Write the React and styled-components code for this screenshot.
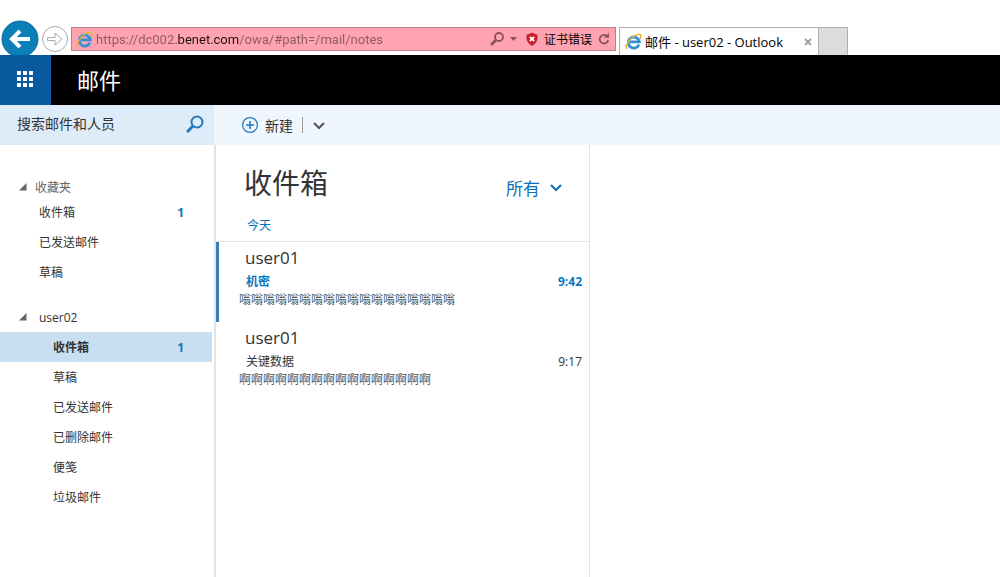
import styled, { createGlobalStyle } from "styled-components";

const favorites = [
  { name: "收件箱", count: 1 },
  { name: "已发送邮件" },
  { name: "草稿" },
];

const folders = [
  { name: "收件箱", count: 1, active: true },
  { name: "草稿" },
  { name: "已发送邮件" },
  { name: "已删除邮件" },
  { name: "便笺" },
  { name: "垃圾邮件" },
];

const messages = [
  {
    from: "user01",
    subject: "机密",
    time: "9:42",
    preview: "嗡嗡嗡嗡嗡嗡嗡嗡嗡嗡嗡嗡嗡嗡嗡嗡嗡嗡",
    unread: true,
  },
  {
    from: "user01",
    subject: "关键数据",
    time: "9:17",
    preview: "啊啊啊啊啊啊啊啊啊啊啊啊啊啊啊啊",
  },
];

export default function App() {
  return (
    <Page>
      <GlobalStyle />
      <BrowserBar>
        <BackButton aria-label="后退">
          <svg width="38" height="35" viewBox="0 0 38 35">
            <circle cx="19" cy="19" r="18" fill="#0b7fb8" stroke="#0a6a9c" />
            <path
              d="M29 19H12M19 11l-8 8 8 8"
              fill="none"
              stroke="#fff"
              strokeWidth="4"
            />
          </svg>
        </BackButton>
        <ForwardButton aria-label="前进">
          <svg width="28" height="28" viewBox="0 0 28 28">
            <circle cx="14" cy="14" r="12.500" fill="#fff" stroke="#a9a9a9" />
            <path
              d="M6.500 12.500h7.500v-4.500l7 6-7 6v-4.500h-7.500z"
              fill="#fff"
              stroke="#a9a9a9"
            />
          </svg>
        </ForwardButton>
        <AddressBar>
          <ExplorerIcon />
          <Address
            aria-label="地址"
            defaultValue="https://dc002.benet.com/owa/#path=/mail/notes"
          />
          <BarButton aria-label="搜索">
            <svg width="28" height="16" viewBox="0 0 28 16">
              <circle
                cx="9"
                cy="6"
                r="4"
                fill="none"
                stroke="#8c525b"
                strokeWidth="1.800"
              />
              <path d="M6 9l-5 5" stroke="#8c525b" strokeWidth="2.600" />
              <path d="M20 6h7l-3.500 4z" fill="#8c525b" />
            </svg>
          </BarButton>
          <Certificate>
            <svg width="12" height="14" viewBox="0 0 12 14">
              <path
                d="M6 1c1.500 1 3.500 1 5 2 .6 4.500-.3 8-5 10.400C1.300 11 .4 7.500 1 3c1.500-1 3.500-1 5-2z"
                fill="#c8202c"
                stroke="#9b1c26"
                strokeWidth=".6"
              />
              <path
                d="M3.800 4.800l4.400 4.400M8.200 4.800l-4.400 4.400"
                stroke="#fff"
                strokeWidth="1.800"
              />
            </svg>
            证书错误
          </Certificate>
          <BarButton aria-label="刷新">
            <svg width="12" height="14" viewBox="0 0 12 14">
              <path
                d="M10.200 8.200A4.300 4.300 0 1 1 8.500 3.700"
                fill="none"
                stroke="#8c525b"
                strokeWidth="1.800"
              />
              <path d="M6 5.800h5V.8z" fill="#8c525b" />
            </svg>
          </BarButton>
        </AddressBar>
        <Tab>
          <ExplorerIcon />
          <TabTitle>邮件 - user02 - Outlook</TabTitle>
          <BarButton aria-label="关闭">
            <svg width="8" height="8" viewBox="0 0 8 8">
              <path d="M1 1l6 6M7 1L1 7" stroke="#a0a0a0" strokeWidth="2" />
            </svg>
          </BarButton>
        </Tab>
        <NewTab aria-label="新选项卡" />
      </BrowserBar>

      <Header>
        <AppsButton aria-label="应用">
          <svg width="16" height="16" viewBox="0 0 16 16" fill="#fff">
            {[0, 6, 12].map((y) =>
              [0, 6, 12].map((x) => (
                <rect key={`${x}-${y}`} x={x} y={y} width="4" height="4" />
              ))
            )}
          </svg>
        </AppsButton>
        <AppTitle>邮件</AppTitle>
      </Header>

      <Toolbar>
        <SearchBox>
          <SearchInput aria-label="搜索" placeholder="搜索邮件和人员" />
          <SearchButton aria-label="开始搜索">
            <svg width="18" height="18" viewBox="0 0 18 18" fill="none">
              <circle cx="11" cy="7" r="5.500" stroke="#2478bd" strokeWidth="2" />
              <path d="M7 11l-6 6" stroke="#2478bd" strokeWidth="3" />
            </svg>
          </SearchButton>
        </SearchBox>
        <NewButton>
          <svg width="16" height="16" viewBox="0 0 16 16" fill="none">
            <circle cx="8" cy="8" r="7.400" stroke="#2478bd" strokeWidth="1.200" />
            <path d="M8 4v8M4 8h8" stroke="#2478bd" strokeWidth="1.600" />
          </svg>
          新建
        </NewButton>
        <Divider />
        <MoreButton aria-label="更多">
          <Chevron color="#555" />
        </MoreButton>
      </Toolbar>

      <Main>
        <Sidebar>
          <GroupTitle $muted>
            <Triangle />
            收藏夹
          </GroupTitle>
          {favorites.map((folder) => (
            <Folder key={folder.name} href="#">
              <span>{folder.name}</span>
              {folder.count && <Count>{folder.count}</Count>}
            </Folder>
          ))}
          <GroupTitle $second>
            <Triangle />
            user02
          </GroupTitle>
          {folders.map((folder) => (
            <Folder key={folder.name} href="#" $nested $active={folder.active}>
              <span>{folder.name}</span>
              {folder.count && <Count>{folder.count}</Count>}
            </Folder>
          ))}
        </Sidebar>

        <MessageList>
          <ListHeader>
            <h1>收件箱</h1>
            <FilterButton>
              所有
              <Chevron color="#0a6fb8" />
            </FilterButton>
          </ListHeader>
          <Day>今天</Day>
          {messages.map((message) => (
            <Message key={message.time} $unread={message.unread}>
              <Sender>{message.from}</Sender>
              <SubjectRow $unread={message.unread}>
                <span>{message.subject}</span>
                <span>{message.time}</span>
              </SubjectRow>
              <Preview>{message.preview}</Preview>
            </Message>
          ))}
        </MessageList>
        <ReadingPane />
      </Main>
    </Page>
  );
}

function ExplorerIcon() {
  return (
    <svg width="17" height="17" viewBox="0 0 17 17" fill="none">
      <path
        d="M14 11.500A5.500 5.500 0 1 1 14.300 8.800H5"
        stroke="#2f93d6"
        strokeWidth="2.800"
      />
      <path
        d="M2.500 15.500C.2 15.800 1 11.500 4.500 7.300 8.500 2.500 14 .2 15.500 1.800c.8.900.3 2.500-.6 4"
        stroke="#e9b52c"
        strokeWidth="1.500"
      />
    </svg>
  );
}

function Chevron({ color }) {
  return (
    <svg width="12" height="10" viewBox="0 0 12 10" fill="none">
      <path d="M1 3l5 5 5-5" stroke={color} strokeWidth="2" />
    </svg>
  );
}

function Triangle() {
  return (
    <svg width="8" height="8" viewBox="0 0 8 8">
      <path d="M7.500 0v7.500H0z" fill="#666" />
    </svg>
  );
}

const GlobalStyle = createGlobalStyle`
  * {
    box-sizing: border-box;
  }

  body {
    margin: 0;
    background: #fff;
    color: #333;
    font-family: "Open Sans", "Noto Sans CJK SC", sans-serif;
    font-size: 12px;
  }

  button,
  input {
    padding: 0;
    border: 0;
    background: none;
    color: inherit;
    font: inherit;
  }

  h1,
  h2,
  p {
    margin: 0;
    font-weight: 400;
  }

  svg {
    display: block;
    flex: none;
  }
`;

const Page = styled.div`
  display: flex;
  flex-direction: column;
  min-height: 100vh;
`;

const BrowserBar = styled.div`
  display: flex;
  align-items: flex-end;
  height: 55px;
  padding-left: 1px;
`;

const BackButton = styled.button`
  flex: none;
`;

const ForwardButton = styled.button`
  flex: none;
  margin: 0 2px;
  padding-bottom: 2px;
`;

const AddressBar = styled.div`
  flex: 0 1 545px;
  display: flex;
  align-items: center;
  height: 24px;
  margin-bottom: 4px;
  padding: 0 5px 0 4px;
  border: 1px solid #b5808a;
  background: #ffa3b0;
`;

/* the host name is darker than the rest of the address */
const Address = styled.input`
  flex: 1;
  min-width: 0;
  height: 20px;
  margin-left: 3px;
  font-family: Roboto, sans-serif;
  font-size: 13px;
  color: transparent;
  caret-color: #000;
  background: linear-gradient(
    90deg,
    #8c5a63 80px,
    #1f0f12 80px,
    #1f0f12 143px,
    #8c5a63 143px
  );
  background-clip: text;
  outline: none;
`;

const BarButton = styled.button`
  flex: none;
`;

const Certificate = styled.div`
  display: flex;
  align-items: center;
  gap: 6px;
  margin: 0 6px 0 8px;
  color: #000;
  white-space: nowrap;
`;

const Tab = styled.div`
  flex: 0 1 200px;
  display: flex;
  align-items: center;
  height: 28px;
  margin-left: 3px;
  padding: 0 6px 0 5px;
  border: 1px solid #b0b0b0;
  border-bottom: 0;
  color: #000;
`;

const TabTitle = styled.span`
  flex: 1;
  margin-left: 3px;
  font-size: 13px;
  line-height: 16px;
  white-space: nowrap;
`;

const NewTab = styled.button`
  width: 29px;
  height: 28px;
  border: 1px solid #b0b0b0;
  border-width: 1px 1px 0 0;
  background: #dcdcdc;
`;

const Header = styled.header`
  display: flex;
  align-items: center;
  height: 50px;
  background: #000;
  color: #fff;
`;

const AppsButton = styled.button`
  display: flex;
  justify-content: center;
  align-items: center;
  width: 51px;
  height: 50px;
  padding: 0 2px 2px 0;
  background: #0a5aa0;
`;

const AppTitle = styled.h2`
  margin-left: 26px;
  padding-bottom: 2px;
  font-size: 22px;
`;

const Toolbar = styled.div`
  display: flex;
  align-items: center;
  height: 40px;
  background: #eff6fe;
  font-size: 14px;
`;

const SearchBox = styled.div`
  display: flex;
  align-items: center;
  width: 214px;
  height: 40px;
  padding: 0 10px 3px 17px;
  background: #deebf9;
`;

const SearchInput = styled.input`
  flex: 1;
  min-width: 0;
  outline: none;

  &::placeholder {
    color: #333;
    opacity: 1;
  }
`;

const SearchButton = styled.button`
  flex: none;
`;

const NewButton = styled.button`
  display: flex;
  align-items: center;
  gap: 7px;
  margin-left: 28px;
`;

const Divider = styled.div`
  width: 1px;
  height: 16px;
  margin: 0 10px 0 9px;
  background: #999;
`;

const MoreButton = styled.button`
  flex: none;
`;

const Main = styled.main`
  flex: 1;
  display: flex;
`;

const Sidebar = styled.nav`
  width: 216px;
  padding: 32px 2px 0 0;
  border-right: 2px solid #e2e2e2;
`;

const GroupTitle = styled.div`
  display: flex;
  align-items: center;
  gap: ${(props) => (props.$muted ? 8 : 12)}px;
  height: ${(props) => (props.$second ? 30 : 20)}px;
  margin-top: ${(props) => (props.$second ? 15 : 0)}px;
  padding-left: 19px;
  color: ${(props) => (props.$muted ? "#666" : "#333")};
`;

const Folder = styled.a`
  display: flex;
  justify-content: space-between;
  align-items: center;
  height: 30px;
  padding: 0 28px 0 ${(props) => (props.$nested ? 53 : 39)}px;
  background: ${(props) => (props.$active ? "#c8dff2" : "transparent")};
  color: #333;
  font-weight: ${(props) => (props.$active ? 700 : 400)};
  text-decoration: none;
`;

const Count = styled.span`
  color: #0a78c0;
  font-weight: 700;
`;

const MessageList = styled.section`
  flex: 0 1 374px;
  border-right: 1px solid #e2e2e2;
`;

const ListHeader = styled.div`
  display: flex;
  justify-content: space-between;
  align-items: center;
  height: 64px;
  padding: 10px 27px 0 28px;

  h1 {
    font-size: 28px;
  }
`;

const FilterButton = styled.button`
  display: flex;
  align-items: center;
  gap: 10px;
  padding-top: 10px;
  color: #0a6fb8;
  font-size: 17px;
`;

const Day = styled.p`
  height: 33px;
  padding-left: 31px;
  border-bottom: 1px solid #e2e2e2;
  color: #0a6fb8;
  line-height: 34px;
`;

const Message = styled.article`
  height: 80px;
  padding: 4px 7px 0 20px;
  border-left: 3px solid
    ${(props) => (props.$unread ? "#3a80b4" : "transparent")};
`;

const Sender = styled.p`
  padding-left: 6px;
  font-size: 17px;
  line-height: 24px;
`;

const SubjectRow = styled.div`
  display: flex;
  justify-content: space-between;
  padding-left: 7px;
  line-height: 24px;
  color: ${(props) => (props.$unread ? "#0a78c0" : "#333")};
  font-weight: ${(props) => (props.$unread ? 700 : 400)};
`;

const Preview = styled.p`
  color: #555;
  line-height: 12px;
`;

const ReadingPane = styled.section`
  flex: 1;
`;
